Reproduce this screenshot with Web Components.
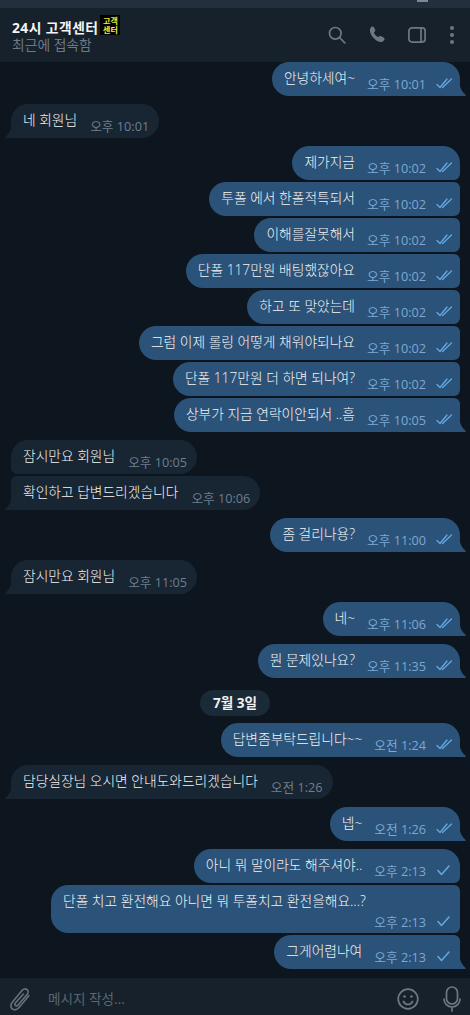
<!DOCTYPE html>
<html lang="ko"><head><meta charset="utf-8"><style>
html,body{margin:0;height:100%}
body{background:#0d151f;font-family:"Open Sans","Noto Sans CJK KR",sans-serif;overflow:hidden}
</style></head><body>
<chat-app></chat-app>
<template id="t-app"><style>
:host{display:flex;flex-direction:column;height:1015px;width:470px;overflow:hidden}
.strip{height:8px;background:#242f3d;flex:none;display:flex;justify-content:flex-end;padding-right:42px}
.strip i{display:block;width:11px;height:2px;background:#7f8892}
main{flex:1;min-height:0;display:flex;flex-direction:column}
</style><div class="strip"><i></i></div><chat-header></chat-header><main><slot></slot></main><chat-input></chat-input></template>
<template id="t-header"><style>
:host{display:flex;height:54px;flex:none;background:#17212b;align-items:center;padding:0 12px;box-sizing:border-box;position:relative}
.info{flex:1;min-width:0}
.name{display:flex;align-items:center;height:20px;font-size:13.8px;font-weight:700;color:#f5f5f5;letter-spacing:.45px}
.badge{width:20px;height:20px;background:#000;color:#f4ee3a;font-size:8px;line-height:9px;font-weight:700;text-align:center;margin-left:2px;margin-top:-3px;letter-spacing:0;display:flex;align-items:center;justify-content:center;box-sizing:border-box}
.sub{font-size:13.8px;color:#6d7883;line-height:18px;margin-top:-1px}
.icons{display:flex;align-items:center;margin-right:3px}
svg{display:block}
.p{margin-left:23px}.s{margin-left:21px}.d{margin-left:23px}
</style><div class="info"><div class="name"><span>24시 고객센터</span><span class="badge">고객<br>센터</span></div><div class="sub">최근에 접속함</div></div>
<div class="icons">
<svg width="18" height="18" viewBox="0 0 18 18" fill="none" stroke="#6d7883" stroke-width="1.700"><circle cx="7.300" cy="7.300" r="5.800"/><path d="M11.500 11.500L16.800 16.800" stroke-linecap="round"/></svg>
<svg class="p" width="18" height="18" viewBox="0 0 20 20" fill="#6d7883"><path d="M2.500 1.200c1-.9 2.500-.6 3.100.6l1.200 2.400c.4.800.2 1.700-.5 2.300l-.9.800c.9 2.300 2.500 4 4.800 5.100l.9-.8c.7-.6 1.600-.7 2.400-.3l2.700 1.400c1.200.6 1.400 2.100.6 3.100-1.100 1.300-2.700 2.200-4.400 1.900C7.500 16.700 2.400 11.500 1.200 6.300.800 4.500 1.200 2.300 2.500 1.200z"/></svg>
<svg class="s" width="18" height="16" viewBox="0 0 18 16" fill="none" stroke="#6d7883" stroke-width="1.700"><rect x=".9" y=".9" width="16.200" height="14.200" rx="3"/><path d="M13 1v14"/></svg>
<svg class="d" width="6" height="18" viewBox="0 0 6 18" fill="#6d7883"><circle cx="3" cy="2" r="2"/><circle cx="3" cy="9" r="2"/><circle cx="3" cy="16" r="2"/></svg>
</div></template>
<template id="t-input"><style>
:host{display:flex;height:37px;flex:none;background:#17212b;align-items:center;box-sizing:border-box;position:relative;padding:4px 9px 0 9px}
.ph{flex:1;font-size:13.600px;color:#5a6672;margin-left:17px;margin-top:-1px}
svg{display:block}
.r{display:flex;align-items:center;gap:24px}
</style><svg width="22" height="26" viewBox="0 0 22 26" fill="none" stroke="#67727d" stroke-width="1.600" stroke-linecap="round" stroke-linejoin="round"><path d="M20 9.500L10 21.500c-2 2.400-5 2.800-6.800 1.300s-1.700-4.500.3-6.900L13 4.500c1.500-1.800 3.700-2.100 5.100-.9s1.300 3.500-.2 5.200L9 19c-.8 1-2 1.100-2.700.5s-.6-1.800.2-2.700L14.500 8"/></svg><div class="ph">메시지 작성...</div>
<div class="r"><svg width="22" height="22" viewBox="0 0 22 22" fill="none" stroke="#6d7883" stroke-width="1.700"><circle cx="11" cy="11" r="9.800"/><circle cx="7.500" cy="8.500" r="1.300" fill="#6d7883" stroke="none"/><circle cx="14.500" cy="8.500" r="1.300" fill="#6d7883" stroke="none"/><path d="M6.500 13.500c1 2 2.600 3 4.500 3s3.500-1 4.500-3" stroke-linecap="round"/></svg>
<svg width="18" height="26" viewBox="0 0 18 26" fill="none" stroke="#6d7883" stroke-width="1.700" stroke-linecap="round"><rect x="3.500" y="1" width="11" height="17" rx="5.500"/><path d="M1 13c0 4.500 3.500 8 8 8s8-3.500 8-8M9 21v4"/></svg></div></template>
<template id="t-bubble"><style>
:host{display:flex;flex:none;margin-top:2px}
:host([first]){margin-top:8px}
:host([start]){margin-top:0}
:host([side=out]){justify-content:flex-end;padding-right:10px}
:host([side=in]){justify-content:flex-start;padding-left:11px}
.b{position:relative;display:flex;flex-wrap:wrap;justify-content:flex-end;align-items:flex-start;box-sizing:border-box;max-width:409px;padding:0 7px 0 12px;min-height:34px;background:#2b5278;color:#f5f5f5;font-size:13.750px}
:host([side=in]) .b{background:#182533;padding-right:10px}
:host([pos=only][side=out]) .b{border-radius:17px 17px 0 17px}
:host([pos=top][side=out]) .b{border-radius:17px 17px 6px 17px}
:host([pos=mid][side=out]) .b{border-radius:17px 6px 6px 17px}
:host([pos=last][side=out]) .b{border-radius:17px 6px 0 17px}
:host([pos=only][side=in]) .b{border-radius:17px 17px 17px 0}
:host([pos=top][side=in]) .b{border-radius:17px 17px 17px 6px}
:host([pos=last][side=in]) .b{border-radius:6px 17px 17px 0}
.t{line-height:18px;padding-top:7px;flex:none;white-space:nowrap;font-weight:300}
.m{display:flex;align-items:center;flex:none;margin-left:12px;height:18px;margin-top:12px;font-size:12.700px;color:#7da8d3;white-space:nowrap;margin-bottom:4px}
:host([side=in]) .m{color:#6d7f8f;margin-left:13px}
svg.c{margin-left:10px;display:block}
svg.tail{position:absolute;bottom:0;display:none}
:host([side=out]) svg.tail{right:-6px}
:host([side=in]) svg.tail{left:-6px}
:host([pos=only]) svg.tail,:host([pos=last]) svg.tail{display:block}
:host([wrap]) .t{padding-top:7px;width:100%}
:host([wrap]) .m{margin-top:2px;margin-bottom:3px}
</style><div class="b"><span class="t"><slot></slot></span><span class="m"><span id="time"></span><svg class="c" id="tk" width="17" height="12" viewBox="0 0 17 12" fill="none" stroke="#62a9e3" stroke-width="1.300" stroke-linecap="round" stroke-linejoin="round"></svg></span><svg class="tail" width="6" height="10" viewBox="0 0 6 10"><path id="tp" d=""/></svg></div></template>
<template id="t-date"><style>
:host{display:flex;justify-content:center;flex:none;margin-top:12px;margin-bottom:-1px}
span{background:#1a2a36;color:#f0f0f0;font-size:13.600px;font-weight:700;border-radius:13px;height:26px;line-height:26px;padding:0 12.500px}
</style><span><slot></slot></span></template>
<script>
function def(name,tid,extra){customElements.define(name,class extends HTMLElement{constructor(){super();this.attachShadow({mode:'open'}).appendChild(document.getElementById(tid).content.cloneNode(true))}connectedCallback(){extra&&extra(this)}})}
def('chat-header','t-header');def('chat-input','t-input');def('chat-date','t-date');def('chat-app','t-app');
def('chat-bubble','t-bubble',el=>{
 const s=el.shadowRoot;s.getElementById('time').textContent=el.getAttribute('time');
 const k=el.getAttribute('ticks'),tk=s.getElementById('tk');
 if(!k){tk.remove()}else tk.innerHTML=k==='2'?'<path d="M1 7.500l3 3L11 2"/><path d="M6.500 10.500L15.500 2"/>':'<path d="M2 6.500l3.500 4L13 2" stroke-width="1.500"/>';
 const out=el.getAttribute('side')==='out';
 const p=s.getElementById('tp');p.setAttribute('d',out?'M0 0v10h5c.8 0 1-.8.500-1.300C3 6.500 1 4 0 0z':'M6 0v10H1c-.8 0-1-.8-.5-1.300C3 6.500 5 4 6 0z');p.setAttribute('fill',out?'#2b5278':'#182533');
});
const M=[['out','안녕하세여~','오후 10:01',2,'only'],['in','네 회원님','오후 10:01',0,'only'],
['out','제가지금','오후 10:02',2,'top'],['out','투폴 에서 한폴적특되서','오후 10:02',2,'mid'],['out','이해를잘못해서','오후 10:02',2,'mid'],['out','단폴 117만원 배팅했잖아요','오후 10:02',2,'mid'],['out','하고 또 맞았는데','오후 10:02',2,'mid'],['out','그럼 이제 롤링 어떻게 채워야되나요','오후 10:02',2,'mid'],['out','단폴 117만원 더 하면 되나여?','오후 10:02',2,'mid'],['out','상부가 지금 연락이안되서 ..흠','오후 10:05',2,'last'],
['in','잠시만요 회원님','오후 10:05',0,'top'],['in','확인하고 답변드리겠습니다','오후 10:06',0,'last'],
['out','좀 걸리나용?','오후 11:00',2,'only'],['in','잠시만요 회원님','오후 11:05',0,'only'],['out','네~','오후 11:06',2,'only'],['out','뭔 문제있나요?','오후 11:35',2,'only'],
'7월 3일',
['out','답변좀부탁드립니다~~','오전 1:24',2,'only'],['in','담당실장님 오시면 안내도와드리겠습니다','오전 1:26',0,'only'],['out','넵~','오전 1:26',2,'only'],['out','아니 뭐 말이라도 해주셔야..','오후 2:13',1,'top'],['out','단폴 치고 환전해요 아니면 뭐 투폴치고 환전을해요...?','오후 2:13',1,'mid'],['out','그게어렵나여','오후 2:13',1,'last']];
const app=document.querySelector('chat-app');
M.forEach((m,i)=>{
 if(typeof m==='string'){const d=document.createElement('chat-date');d.textContent=m;app.appendChild(d);return}
 const b=document.createElement('chat-bubble');b.setAttribute('side',m[0]);b.setAttribute('time',m[2]);if(m[3])b.setAttribute('ticks',m[3]);b.setAttribute('pos',m[4]);
 if(i===0)b.setAttribute('start','');
 if(i>0&&(m[4]==='only'||m[4]==='top'))b.setAttribute('first','');
 if(m[1].startsWith('단폴 치고'))b.setAttribute('wrap','');
 b.textContent=m[1];app.appendChild(b);
});
</script></body></html>
